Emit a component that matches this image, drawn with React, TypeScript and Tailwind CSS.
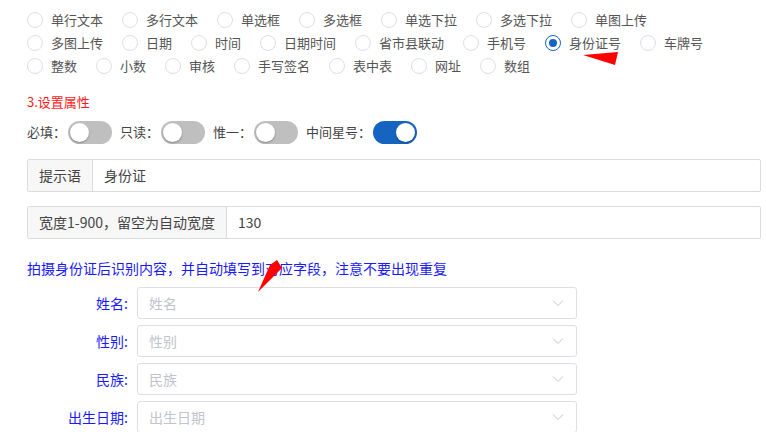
import React from 'react';

const FONT = { fontFamily: '"Microsoft YaHei", "Noto Sans CJK SC", "Noto Sans", sans-serif' };

const rows: string[][] = [
  ['单行文本', '多行文本', '单选框', '多选框', '单选下拉', '多选下拉', '单图上传'],
  ['多图上传', '日期', '时间', '日期时间', '省市县联动', '手机号', '身份证号', '车牌号'],
  ['整数', '小数', '审核', '手写签名', '表中表', '网址', '数组'],
];

const Radio = ({ label, checked }: { label: string; checked?: boolean }) => (
  <label className="flex items-center mr-[19px] cursor-pointer">
    <span
      className={
        checked
          ? 'w-[16px] h-[16px] rounded-full border border-[#1565c0] flex items-center justify-center'
          : 'w-[16px] h-[16px] rounded-full border border-[#dcdfe6]'
      }
    >
      {checked && <span className="w-[8px] h-[8px] rounded-full bg-[#1565c0]" />}
    </span>
    <span className="ml-[8px] text-[13px] text-[#555]">{label}</span>
  </label>
);

const Toggle = ({ label, on }: { label: string; on?: boolean }) => (
  <div className="flex items-center mr-[8px]">
    <span className="text-[13px] text-[#444] mr-[2px]">{label}</span>
    <span
      className={
        on
          ? 'w-[44px] h-[23px] rounded-full bg-[#1565c0] flex items-center justify-end px-[2px]'
          : 'w-[44px] h-[23px] rounded-full bg-[#bfbfbf] flex items-center justify-start px-[2px]'
      }
    >
      <span className="w-[19px] h-[19px] rounded-full bg-white shadow-[0_1px_2px_rgba(0,0,0,0.3)]" />
    </span>
  </div>
);

const InputGroup = ({ label, value }: { label: string; value: string }) => (
  <div className="flex h-[33px] border border-[#dcdcdc] rounded-[2px] text-[14px]">
    <div className="px-[11px] flex items-center bg-[#f7f7f7] border-r border-[#dcdcdc] text-[#444]">{label}</div>
    <div className="px-[11px] flex items-center text-[#444]">{value}</div>
  </div>
);

const SelectRow = ({ label }: { label: string }) => (
  <div className="flex items-center mb-[6px]">
    <div className="w-[110px] text-right pr-[9px] text-[14px] text-[#1a1aff]">{label}:</div>
    <div className="w-[440px] h-[32px] border border-[#dcdfe6] rounded-[3px] flex items-center justify-between pl-[11px] pr-[12px]">
      <span className="text-[14px] text-[#c0c4cc]">{label}</span>
      <svg width="12" height="8" viewBox="0 0 12 8" fill="none">
        <path d="M1 1.5 L6 6.5 L11 1.5" stroke="#c0c4cc" strokeWidth="1" />
      </svg>
    </div>
  </div>
);

export default function App() {
  return (
    <div className="relative w-[766px] h-[440px] bg-white" style={FONT}>
      <div className="h-[432px] overflow-hidden pl-[27px] pr-[5px]">
        <div className="pt-[8px]">
          {rows.map((row, i) => (
            <div key={i} className="flex items-center h-[23px]">
              {row.map((r) => (
                <Radio key={r} label={r} checked={r === '身份证号'} />
              ))}
            </div>
          ))}
        </div>

        <div className="mt-[15px] h-[20px] flex items-center text-[13px] text-[#ff1a1a]">3.设置属性</div>

        <div className="mt-[8px] flex items-center h-[24px]">
          <Toggle label="必填：" />
          <Toggle label="只读：" />
          <Toggle label="惟一：" />
          <Toggle label="中间星号：" on />
        </div>

        <div className="mt-[15px]">
          <InputGroup label="提示语" value="身份证" />
        </div>
        <div className="mt-[14px]">
          <InputGroup label="宽度1-900，留空为自动宽度" value="130" />
        </div>

        <div className="mt-[19px] h-[20px] flex items-center text-[14px] text-[#1a1aff]">
          拍摄身份证后识别内容，并自动填写到对应字段，注意不要出现重复
        </div>

        <div className="mt-[9px]">
          <SelectRow label="姓名" />
          <SelectRow label="性别" />
          <SelectRow label="民族" />
          <SelectRow label="出生日期" />
        </div>
      </div>

      {/* annotation marks */}
      <svg className="absolute inset-0 pointer-events-none" width="766" height="440">
        <polygon points="583,55 618,52 615,65" fill="#ff0000" />
        <polygon points="258,292 270,265 277,260 282,268" fill="#ff0000" />
      </svg>
    </div>
  );
}
